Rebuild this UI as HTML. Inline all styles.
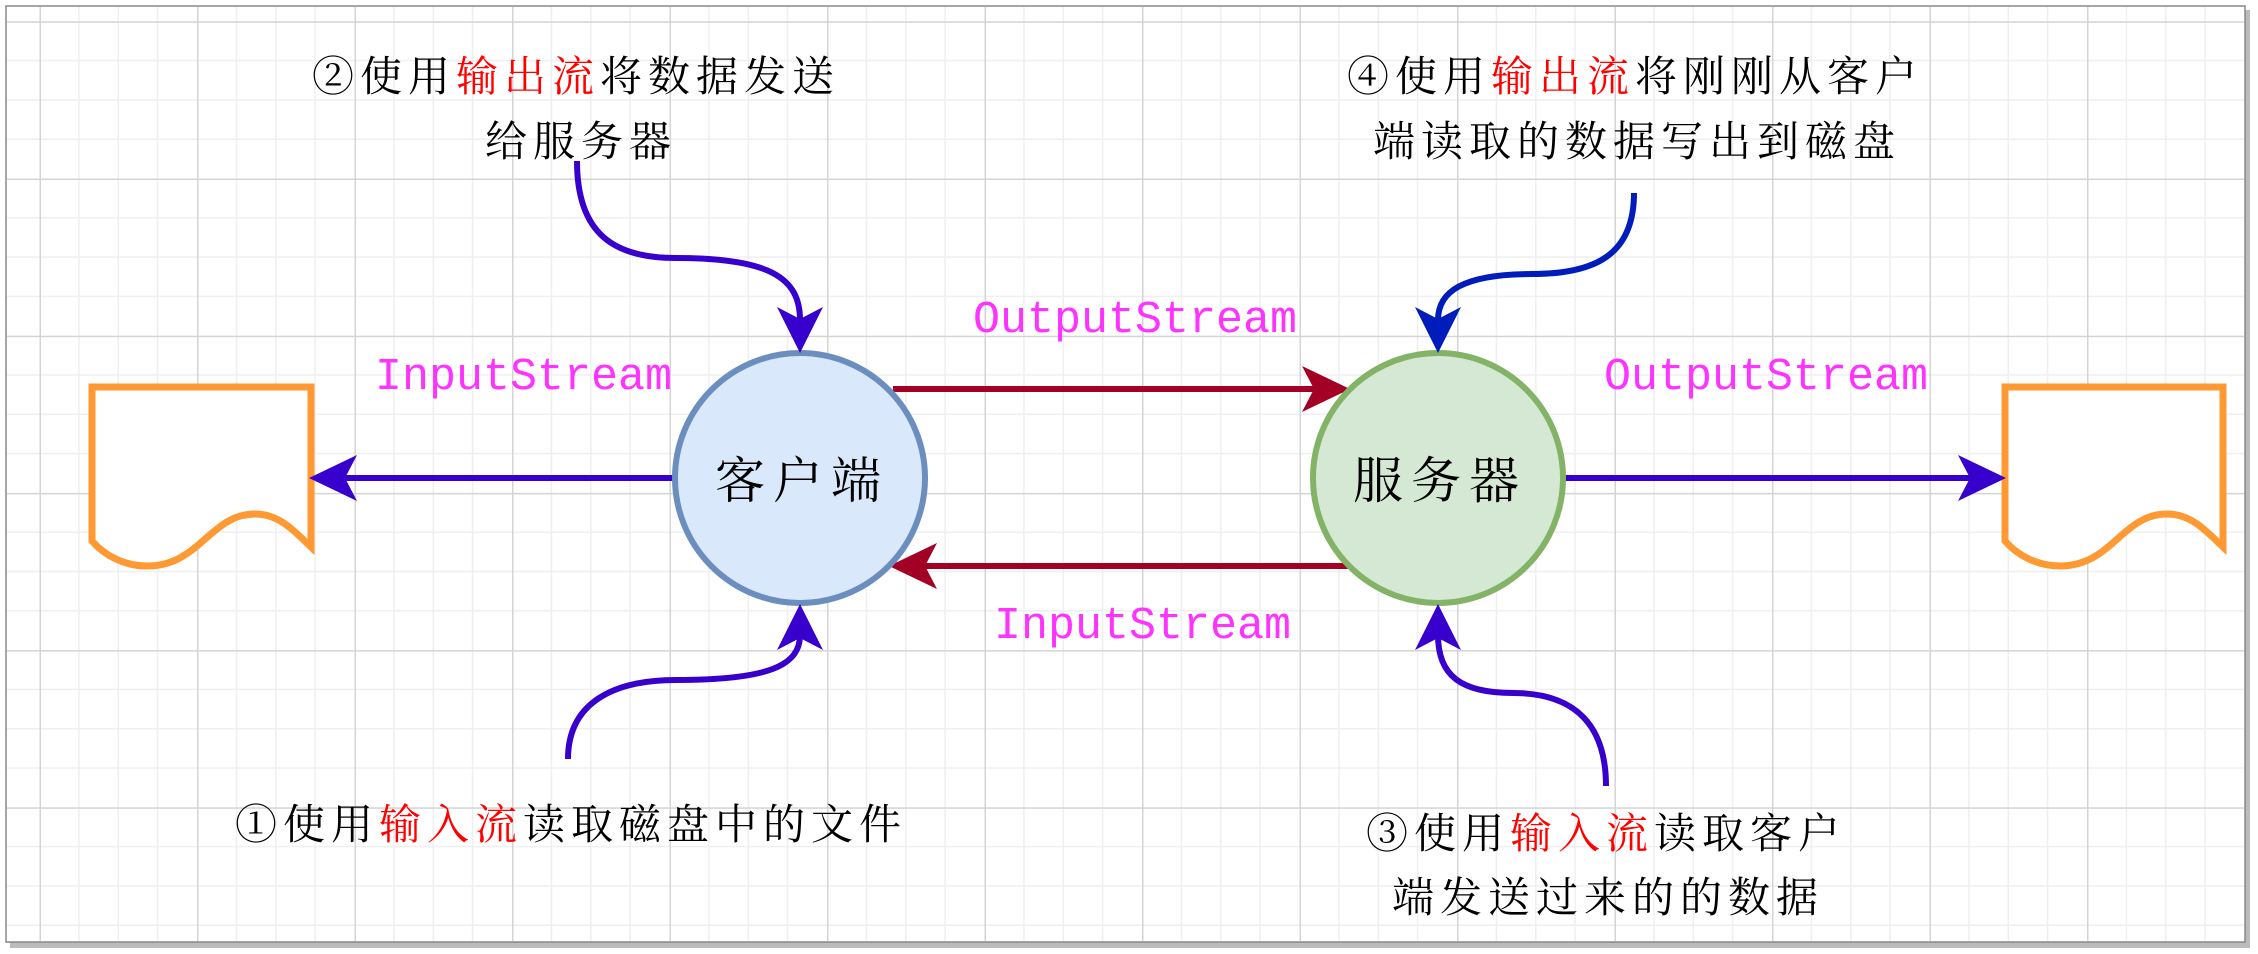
<!DOCTYPE html>
<html><head><meta charset="utf-8"><style>
html,body{margin:0;padding:0;background:#fff;width:2258px;height:954px;overflow:hidden}
svg{display:block}
.cn{font-family:"Liberation Serif","Noto Serif CJK SC",serif;font-size:42px;letter-spacing:6px;fill:#000}
.r{fill:#f00}
.en{font-family:"Liberation Mono","DejaVu Sans Mono",monospace;font-size:45px;fill:#ff33ff}
</style></head><body>
<svg width="2258" height="954" viewBox="0 0 2258 954" xmlns="http://www.w3.org/2000/svg">
<defs>
<pattern id="g" patternUnits="userSpaceOnUse" x="39.5" y="21.3" width="157.5" height="157.2">
<g stroke="#efefef" stroke-width="1.5">
<line x1="39.4" y1="0" x2="39.4" y2="157.2"/><line x1="78.8" y1="0" x2="78.8" y2="157.2"/><line x1="118.1" y1="0" x2="118.1" y2="157.2"/>
<line x1="0" y1="39.3" x2="157.5" y2="39.3"/><line x1="0" y1="78.6" x2="157.5" y2="78.6"/><line x1="0" y1="117.9" x2="157.5" y2="117.9"/>
</g>
<g stroke="#d4d4d4" stroke-width="1.5"><line x1="0.75" y1="0" x2="0.75" y2="157.2"/><line x1="0" y1="0.75" x2="157.5" y2="0.75"/></g>
</pattern>
</defs>
<rect x="10" y="10" width="2240" height="938" fill="#bbb"/>
<rect x="6" y="6" width="2239" height="936" fill="#fff" stroke="#888" stroke-width="1.5"/>
<rect x="7" y="7" width="2237" height="934" fill="url(#g)"/>

<!-- docs -->
<path d="M92,387 H311 V547 C295,532 280,514 255,514 C210,514 200,566 147,566 C125,566 105,556 92,541 Z" fill="#fff" stroke="#ff9933" stroke-width="7"/>
<path d="M2005,387 H2223 V547 C2207,532 2192,514 2167,514 C2122,514 2112,566 2060,566 C2038,566 2018,556 2005,541 Z" fill="#fff" stroke="#ff9933" stroke-width="7"/>

<!-- horizontal arrows -->
<line x1="675" y1="478" x2="345" y2="478" stroke="#3700cc" stroke-width="6"/>
<polygon points="309,478 357,455 345,478 357,501" fill="#3700cc"/>
<line x1="1564" y1="478" x2="1970" y2="478" stroke="#3700cc" stroke-width="6"/>
<polygon points="2006,478 1958,455 1970,478 1958,501" fill="#3700cc"/>

<line x1="893" y1="389" x2="1320" y2="389" stroke="#a20025" stroke-width="6"/>
<polygon points="1350,389 1302,366 1314,389 1302,412" fill="#a20025"/>
<line x1="1350" y1="566" x2="925" y2="566" stroke="#a20025" stroke-width="6"/>
<polygon points="889,566 937,543 925,566 937,589" fill="#a20025"/>

<!-- circles -->
<circle cx="800" cy="478" r="125" fill="#dae8fc" stroke="#6c8ebf" stroke-width="6"/>
<circle cx="1438" cy="478" r="125" fill="#d5e8d4" stroke="#82b366" stroke-width="6"/>
<text x="802" y="498" text-anchor="middle" class="cn" style="font-size:50px;letter-spacing:8px">客户端</text>
<text x="1440" y="498" text-anchor="middle" class="cn" style="font-size:50px;letter-spacing:8px">服务器</text>

<!-- curved arrows -->
<g fill="none" stroke-width="6">
<path d="M577,161 C577,235 615,258 676,258 C770,258 800,278 800,320" stroke="#3700cc"/>
<path d="M568,759 C568,705 610,680 676,680 C770,680 800,665 800,635" stroke="#3700cc"/>
<path d="M1634,193 C1634,255 1595,274 1532,274 C1462,274 1438,292 1438,320" stroke="#001dbc"/>
<path d="M1606,786 C1606,725 1575,693 1513,693 C1460,693 1438,675 1438,635" stroke="#3700cc"/>
</g>
<polygon points="800,353 777,307 800,319 823,307" fill="#3700cc"/>
<polygon points="800,604 777,650 800,638 823,650" fill="#3700cc"/>
<polygon points="1438,353 1415,307 1438,319 1461,307" fill="#001dbc"/>
<polygon points="1438,604 1415,650 1438,638 1461,650" fill="#3700cc"/>

<!-- english labels -->
<text x="375" y="389" class="en">InputStream</text>
<text x="973" y="332" class="en">OutputStream</text>
<text x="1604" y="389" class="en">OutputStream</text>
<text x="994" y="638" class="en">InputStream</text>

<!-- chinese labels -->
<text x="312" y="91" class="cn">②使用<tspan class="r">输出流</tspan>将数据发送</text>
<text x="485" y="156" class="cn">给服务器</text>
<text x="1347" y="91" class="cn">④使用<tspan class="r">输出流</tspan>将刚刚从客户</text>
<text x="1373" y="156" class="cn">端读取的数据写出到磁盘</text>
<text x="235" y="839" class="cn">①使用<tspan class="r">输入流</tspan>读取磁盘中的文件</text>
<text x="1366" y="848" class="cn">③使用<tspan class="r">输入流</tspan>读取客户</text>
<text x="1392" y="912" class="cn">端发送过来的的数据</text>
</svg>
</body></html>
